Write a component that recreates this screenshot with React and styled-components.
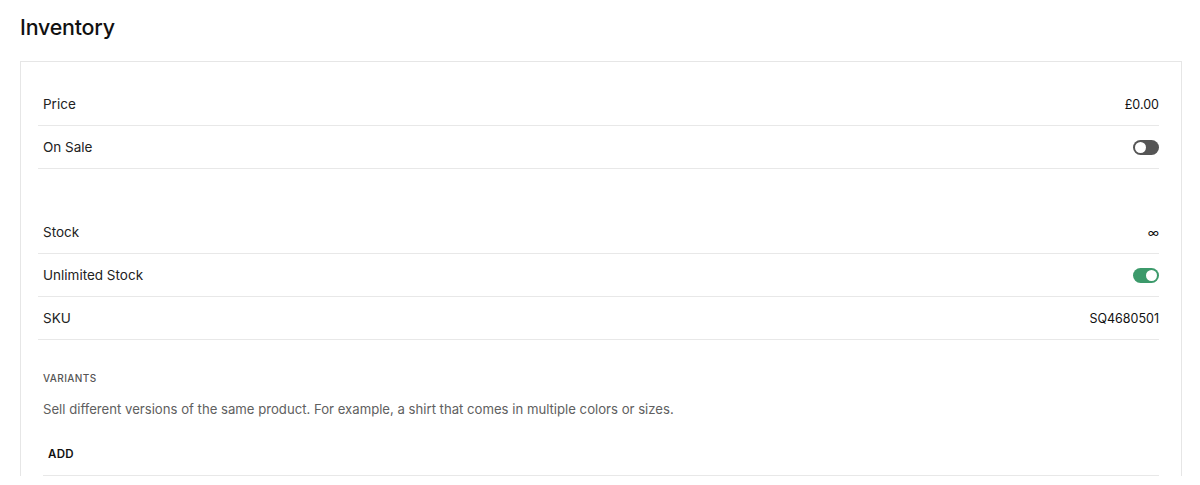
import React from 'react';
import styled, { createGlobalStyle } from 'styled-components';

const GlobalStyle = createGlobalStyle`
  body {
    margin: 0;
    background: #fff;
    font-family: Inter, "Liberation Sans", Arial, sans-serif;
    color: #1a1a1a;
  }
`;

const Page = styled.div`
  width: 1200px;
  height: 485px;
  overflow: hidden;
  padding: 12px 18px 0 20px;
  box-sizing: border-box;
`;

const Title = styled.h1`
  margin: 0 0 19px;
  font-size: 21.4px;
  line-height: 30px;
  font-weight: 500;
  letter-spacing: -0.2px;
  color: #111;
`;

const Card = styled.section`
  border: 1px solid #e6e6e6;
  border-bottom: none;
  padding: 21px 22px 0 17px;
`;

const Row = styled.div`
  display: flex;
  justify-content: space-between;
  align-items: center;
  height: 42px;
  padding: 0 0 0 5px;
  border-bottom: ${p => (p.$plain ? 'none' : '1px solid #e8e8e8')};
  font-size: 13.5px;
  color: #222;
`;

const Value = styled.span`
  font-size: 12.5px;
  color: #111;
`;

const Infinity = styled.span`
  font-size: 12px;
  color: #111;
`;

const Toggle = styled.span`
  position: relative;
  display: inline-block;
  width: 26px;
  height: 15px;
  border-radius: 8px;
  background: ${p => (p.$on ? '#3c9a6b' : '#555')};
  &::after {
    content: '';
    position: absolute;
    top: 2px;
    left: ${p => (p.$on ? '13px' : '2px')};
    width: 11px;
    height: 11px;
    border-radius: 50%;
    background: #fff;
  }
`;

const Variants = styled.div`
  padding: 32px 0 0 5px;
`;

const Heading = styled.div`
  font-size: 10px;
  font-weight: 500;
  letter-spacing: 0.4px;
  text-transform: uppercase;
  color: #555;
`;

const Help = styled.p`
  margin: 17px 0 0;
  font-size: 13.15px;
  color: #606060;
`;

const AddButton = styled.button`
  display: block;
  width: 100%;
  margin-top: 30px;
  padding: 0 0 14px 5px;
  border: none;
  border-bottom: 1px solid #e8e8e8;
  background: none;
  text-align: left;
  font-family: inherit;
  font-size: 11.5px;
  font-weight: 600;
  letter-spacing: 0.3px;
  color: #111;
`;

export default function App() {
  return (
    <>
      <GlobalStyle />
      <Page>
        <Title>Inventory</Title>
        <Card>
          <Row>
            <span>Price</span>
            <Value>£0.00</Value>
          </Row>
          <Row>
            <span>On Sale</span>
            <Toggle />
          </Row>
          <Row $plain />
          <Row>
            <span>Stock</span>
            <Infinity>∞</Infinity>
          </Row>
          <Row>
            <span>Unlimited Stock</span>
            <Toggle $on />
          </Row>
          <Row>
            <span>SKU</span>
            <Value>SQ4680501</Value>
          </Row>
          <Variants>
            <Heading>Variants</Heading>
            <Help>
              Sell different versions of the same product. For example, a shirt that comes in multiple colors or sizes.
            </Help>
            <AddButton>ADD</AddButton>
          </Variants>
        </Card>
      </Page>
    </>
  );
}
